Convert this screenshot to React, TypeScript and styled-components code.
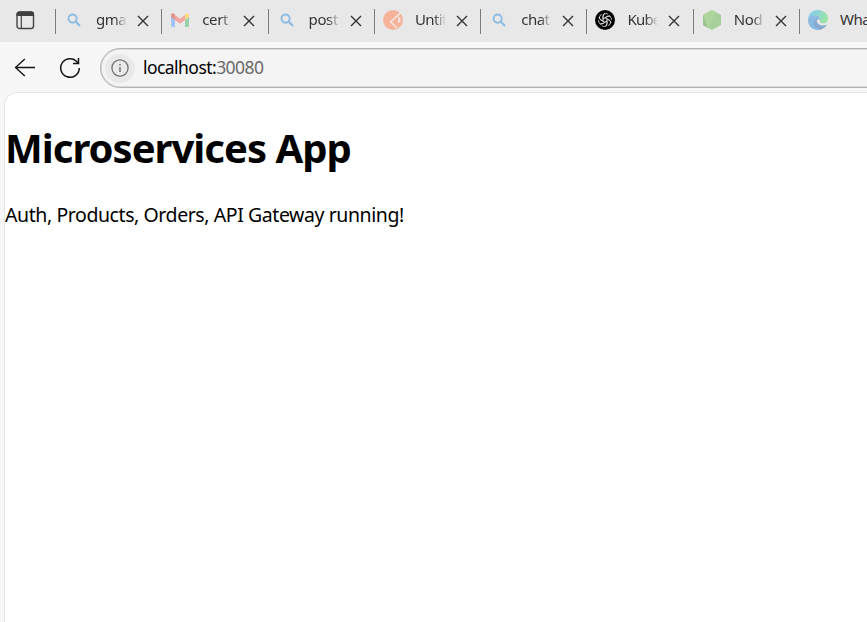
import React from "react";
import styled, { createGlobalStyle } from "styled-components";

const GlobalStyle = createGlobalStyle`
  * { box-sizing: border-box; }
  body { margin: 0; overflow: hidden; background: #f7f7f7; font-family: "Segoe UI", "Noto Sans", "Open Sans", sans-serif; }
`;

const Browser = styled.div`
  display: flex;
  flex-direction: column;
  width: 100%;
  height: 100vh;
  overflow: hidden;
  background: #f7f7f7;
`;

const TabStrip = styled.div`
  display: flex;
  flex: none;
  height: 42px;
  background: #e8e8e8;
  overflow: hidden;
`;

const TabMenu = styled.div`
  flex: none;
  width: 55px;
  padding: 11px 0 0 16px;
`;

const Tab = styled.div`
  display: flex;
  flex: none;
  width: 106.3px;
  height: 40px;
  align-items: center;
`;

const Divider = styled.span`
  flex: none;
  width: 1px;
  height: 25px;
  margin-top: 3px;
  background: #7c7c7c;
`;

const TabIcon = styled.span`
  display: flex;
  flex: none;
  width: 20px;
  height: 20px;
  margin-left: 8px;
`;

const TabLabel = styled.span<{ $tracking: number; $open?: boolean }>`
  flex: none;
  width: ${(p) => (p.$open ? 34 : 31)}px;
  margin: -2px 0 0 12px;
  font-size: 15px;
  line-height: 24px;
  color: #353535;
  letter-spacing: ${(p) => p.$tracking}px;
  white-space: pre;
  overflow: hidden;
  mask-image: ${(p) => (p.$open ? "none" : "linear-gradient(to right, #000 60%, transparent 100%)")};
`;

const TabClose = styled.span`
  display: flex;
  flex: none;
  margin: 1px 0 0 10px;
`;

const Toolbar = styled.div`
  display: flex;
  flex: none;
  height: 50px;
  padding: 6px 0 4px 14px;
`;

const ToolButton = styled.span<{ $width: number }>`
  display: flex;
  flex: none;
  align-items: center;
  width: ${(p) => p.$width}px;
  height: 40px;
`;

const AddressBar = styled.div`
  display: flex;
  flex: 1;
  align-items: center;
  height: 40px;
  margin-right: -30px;
  padding-left: 4px;
  border: 1px solid #b4b4b4;
  border-radius: 20px;
  background: #f4f4f4;
  box-shadow: inset 0 0 0 0.6px #c4c4c4;
`;

const SiteInfo = styled.span`
  display: flex;
  flex: none;
  align-items: center;
  justify-content: center;
  width: 30px;
  height: 29px;
  border-radius: 50%;
  background: #e9e9e9;
`;

const Address = styled.span`
  margin: -2px 0 0 8px;
  font-size: 17.5px;
  line-height: 28px;
  letter-spacing: -0.55px;
  color: #000;
`;

const Port = styled.span`
  color: #6a6a6a;
`;

const Page = styled.main`
  flex: 1;
  margin: 0 -12px 0 4px;
  padding-left: 1px;
  border: 1px solid #e6e6e6;
  border-bottom: 0;
  border-radius: 13px 0 0 0;
  background: #fff;
`;

const Title = styled.h1`
  margin: 28px 0 0 -1px;
  font-size: 40px;
  line-height: 54px;
  font-weight: 700;
  letter-spacing: -0.97px;
  color: #000;
  white-space: nowrap;
`;

const Message = styled.p`
  margin: 26px 0 0 -1px;
  font-size: 19.5px;
  line-height: 28px;
  letter-spacing: -0.42px;
  color: #000;
  white-space: nowrap;
`;

const SearchIcon = () => (
  <svg width="20" height="20" viewBox="0 0 20 20" fill="none" stroke="#8dbbe4">
    <circle cx="8.6" cy="8.6" r="4.1" strokeWidth="1.9" />
    <path d="M11.8 11.8 16 16" strokeWidth="2.2" />
  </svg>
);

const GmailIcon = () => (
  <svg width="20" height="20" viewBox="0 0 20 20">
    <path d="M1 5.5 5 8.5V17H2.4Q1 17 1 15.6Z" fill="#a3c2f5" />
    <path d="M15 8.5 19 5.5V15.6Q19 17 17.6 17H15Z" fill="#98d2aa" />
    <path d="M5 5 10 8.8 15 5V10L10 13.8 5 10Z" fill="#f1a69f" />
    <path d="M1 6V5C1 3.2 3 2.8 4.3 3.8L5 4.4V10L1 7Z" fill="#df9791" />
    <path d="M19 6V5C19 3.2 17 2.8 15.7 3.8L15 4.4V10L19 7Z" fill="#f9dc83" />
  </svg>
);

const PostmanIcon = () => (
  <svg width="20" height="20" viewBox="0 0 20 20" fill="none">
    <circle cx="10" cy="10" r="10" fill="#f5b39c" />
    <path d="M17.6 3 7.6 11.8 14 18" stroke="#f4ebe7" strokeWidth="1.4" />
    <path d="M16 7.4Q18.5 9.8 15.6 12.3Z" stroke="#f4ebe7" strokeWidth="1.1" />
  </svg>
);

const ChatIcon = () => (
  <svg width="20" height="20" viewBox="0 0 20 20" fill="none">
    <circle cx="10" cy="10" r="10" fill="#000" />
    <g stroke="#e8e8e8" strokeWidth="0.8" strokeLinejoin="round">
      {[0, 60, 120, 180, 240, 300].map((angle) => (
        <path key={angle} transform={`rotate(${angle} 10 10)`} d="M8.1 11.1V6.6Q8.1 3.3 11.2 3.5 12.3 3.7 13 4.5M9.4 8 12.4 6.2Q14.2 5.4 15.5 6.5" />
      ))}
    </g>
  </svg>
);

const NodeIcon = () => (
  <svg width="20" height="20" viewBox="0 0 20 20">
    <path d="M10 0 19 5V15L10 20 1 15V5Z" fill="#a6d09b" />
    <path d="M10 0 1 5V15L5.8 17.8 14 2.2Z" fill="#afd59e" />
    <path d="M1 5V15L5.8 17.8Z" fill="#98c290" />
  </svg>
);

const EdgeIcon = () => (
  <svg width="20" height="20" viewBox="0 0 20 20">
    <defs>
      <linearGradient id="edge-top" x1="0" y1="0" x2="1" y2="0.5">
        <stop offset="0.2" stopColor="#86cdea" />
        <stop offset="1" stopColor="#9ce4a5" />
      </linearGradient>
      <linearGradient id="edge-side" x1="0" y1="0" x2="0" y2="1">
        <stop offset="0" stopColor="#8fb9df" />
        <stop offset="1" stopColor="#86b9e4" />
      </linearGradient>
    </defs>
    <path d="M0 10C0 4 4.5 0 10 0S20 4 20 8.4C20 11.6 17.7 13.3 15 13.3 12.6 13.3 11.3 12.6 12 11.3 13.2 8.3 10.5 5.8 7 6 3.5 6 1 7.6 0 10Z" fill="url(#edge-top)" />
    <path d="M0 10C1 6.5 4 5 7.5 5.5 10.9 6 12.8 8.4 12.3 10.6 11 8.4 7.6 9 7.4 12 7.2 15.4 9.5 18.6 12.5 19.7 5.8 21.5 0 16.5 0 10Z" fill="url(#edge-side)" />
    <path d="M8.8 8.6C4.5 11 5.4 18 12.5 19.7 15.6 18.8 17.6 17.2 18.9 14.8 15 16.6 9.6 15.4 8.8 11.6 8.5 10.2 9.5 9.3 10.4 8.9Z" fill="#86a8cf" />
  </svg>
);

const CloseIcon = () => (
  <svg width="12" height="12" viewBox="0 0 12 12" fill="none" stroke="#333" strokeWidth="1.4">
    <path d="m1 1 10 10M11 1 1 11" />
  </svg>
);

const TabMenuIcon = () => (
  <svg width="19" height="19" viewBox="0 0 19 19" fill="none">
    <rect x="1" y="1" width="16.5" height="16.5" rx="2.6" stroke="#444" strokeWidth="1.4" />
    <path d="M0.5 5V3.5Q0.5 0.4 3.5 0.4H15Q18 0.4 18 3.5V5Z" fill="#3f3f3f" />
    <path d="M5.3 5V17.5" stroke="#444" strokeWidth="1.2" />
  </svg>
);

const BackIcon = () => (
  <svg width="22" height="20" viewBox="0 0 22 20" fill="none" stroke="#151515" strokeWidth="1.4">
    <path d="M21 9.5H1.5M10.8 1 1.5 9.5 10.8 18" strokeLinejoin="round" />
  </svg>
);

const ReloadIcon = () => (
  <svg width="22" height="22" viewBox="0 0 22 22" fill="none" stroke="#151515" strokeWidth="1.5">
    <path d="M20.3 11A9.3 9.3 0 1 1 18.6 5.6M19.5 1V6.4H14" />
  </svg>
);

const InfoIcon = () => (
  <svg width="18" height="18" viewBox="0 0 18 18" fill="none" stroke="#727272">
    <circle cx="9" cy="9" r="8.1" strokeWidth="1.3" />
    <path d="M9 8V13M9 5V6.5" strokeWidth="1.5" />
  </svg>
);

const tabs = [
  { label: "gma", icon: <SearchIcon />, tracking: -0.5 },
  { label: "cert", icon: <GmailIcon />, tracking: -0.4 },
  { label: "post", icon: <SearchIcon />, tracking: -0.4 },
  { label: "Untit", icon: <PostmanIcon />, tracking: -0.6 },
  { label: "chat", icon: <SearchIcon />, tracking: -0.5 },
  { label: "Kube", icon: <ChatIcon />, tracking: -0.8 },
  { label: "Nod", icon: <NodeIcon />, tracking: -0.4 },
  { label: "Wha", icon: <EdgeIcon />, tracking: -0.5, open: true },
];

export default function App() {
  return (
    <Browser>
      <GlobalStyle />
      <TabStrip>
        <TabMenu><TabMenuIcon /></TabMenu>
        {tabs.map((tab, i) => (
          <Tab key={i}>
            <Divider />
            <TabIcon>{tab.icon}</TabIcon>
            <TabLabel $tracking={tab.tracking} $open={tab.open}>{tab.label}</TabLabel>
            <TabClose><CloseIcon /></TabClose>
          </Tab>
        ))}
      </TabStrip>
      <Toolbar>
        <ToolButton $width={45}><BackIcon /></ToolButton>
        <ToolButton $width={41}><ReloadIcon /></ToolButton>
        <AddressBar>
          <SiteInfo><InfoIcon /></SiteInfo>
          <Address>localhost:<Port>30080</Port></Address>
        </AddressBar>
      </Toolbar>
      <Page>
        <Title>Microservices App</Title>
        <Message>Auth, Products, Orders, API Gateway running!</Message>
      </Page>
    </Browser>
  );
}
